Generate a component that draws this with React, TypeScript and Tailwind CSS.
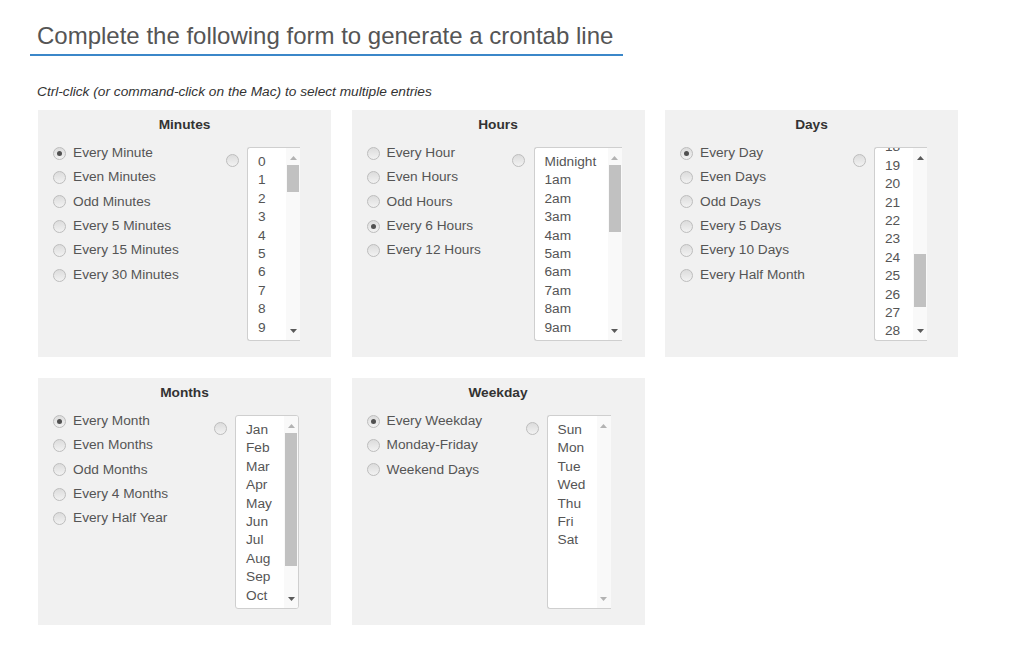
import React from "react";

type Opt = { label: string; checked?: boolean };

const Radio = ({ checked }: { checked?: boolean }) => (
  <span className="w-[13px] h-[13px] rounded-full border border-[#bdbdbd] bg-linear-to-b from-[#dcdcdc] to-[#f2f2f2] flex items-center justify-center shrink-0">
    {checked && <span className="w-[5px] h-[5px] rounded-full bg-[#505050]" />}
  </span>
);

const Arrow = ({ up, dark }: { up?: boolean; dark?: boolean }) => (
  <svg width="7" height="4" viewBox="0 0 7 4">
    <polygon
      points={up ? "0,4 7,4 3.5,0" : "0,0 7,0 3.5,4"}
      fill={dark ? "#5a5a5a" : "#b3b3b3"}
    />
  </svg>
);

type PanelProps = {
  title: string;
  options: Opt[];
  listW: string;
  gap: string;
  boxW: string;
  rightBorder?: boolean;
  items: string[];
  scrollClass?: string;
  thumb?: string;
  upDark?: boolean;
  downDark?: boolean;
};

const Panel = (p: PanelProps) => (
  <div className="h-[247px] bg-[#f1f1f1] pt-[7px]">
    <div className="text-center font-bold leading-[16px] text-[13.7px] text-[#333]">{p.title}</div>
    <div className="flex mt-[8px]">
      <div className={`${p.listW} pl-[15px] shrink-0`}>
        {p.options.map((o) => (
          <div key={o.label} className="h-[24.4px] flex items-center gap-[7px] text-[13.7px] text-[#555]">
            <Radio checked={o.checked} />
            <span className="whitespace-nowrap">{o.label}</span>
          </div>
        ))}
      </div>
      <div className="mt-[13px]">
        <Radio />
      </div>
      <div
        className={
          p.rightBorder
            ? `${p.gap} ${p.boxW} mt-[6px] h-[194px] flex bg-white border border-[#cfcfcf] rounded-[3px] overflow-hidden`
            : `${p.gap} ${p.boxW} mt-[6px] h-[194px] flex bg-white border-y border-l border-[#cfcfcf] rounded-l-[3px] overflow-hidden`
        }
      >
        <div className="flex-1 overflow-hidden pl-[10px] pt-[5px]">
          <div className={p.scrollClass ?? ""}>
            {p.items.map((it) => (
              <div key={it} className="leading-[18.4px] h-[18.4px] text-[13.7px] text-[#555] whitespace-nowrap">
                {it}
              </div>
            ))}
          </div>
        </div>
        <div className="w-[14px] shrink-0 bg-[#f9f9f9] flex flex-col">
          <div className="h-[17px] flex items-center justify-center pt-[2px]">
            <Arrow up dark={p.upDark} />
          </div>
          <div className="flex-1 px-[1px]">
            {p.thumb && <div className={`${p.thumb} bg-[#c1c1c1]`} />}
          </div>
          <div className="h-[17px] flex items-center justify-center pb-[1px]">
            <Arrow dark={p.downDark} />
          </div>
        </div>
      </div>
    </div>
  </div>
);

const minutes = Array.from({ length: 10 }, (_, i) => String(i));
const hours = ["Midnight", ...Array.from({ length: 9 }, (_, i) => `${i + 1}am`)];
const days = Array.from({ length: 11 }, (_, i) => String(i + 18));
const months = ["Jan", "Feb", "Mar", "Apr", "May", "Jun", "Jul", "Aug", "Sep", "Oct"];
const weekdays = ["Sun", "Mon", "Tue", "Wed", "Thu", "Fri", "Sat"];

export default function App() {
  return (
    <div className="w-[1024px] h-[645px] bg-white overflow-hidden font-['Liberation_Sans',Arial,sans-serif]">
      <div className="pl-[30px] pt-[22px]">
        <h2 className="inline-block pl-[7px] pr-[10px] pb-[4px] border-b-2 border-[#3b87c9] text-[24px] leading-[28px] text-[#555] font-normal">
          Complete the following form to generate a crontab line
        </h2>
      </div>
      <p className="pl-[37px] mt-[28px] italic text-[13.7px] leading-[16px] text-[#333]">
        Ctrl-click (or command-click on the Mac) to select multiple entries
      </p>
      <div className="pl-[38px] mt-[10px] grid grid-cols-[293px_293px_293px] gap-x-[20.5px] gap-y-[21px]">
        <Panel
          title="Minutes"
          options={[
            { label: "Every Minute", checked: true },
            { label: "Even Minutes" },
            { label: "Odd Minutes" },
            { label: "Every 5 Minutes" },
            { label: "Every 15 Minutes" },
            { label: "Every 30 Minutes" },
          ]}
          listW="w-[188px]"
          gap="ml-[8px]"
          boxW="w-[53px]"
          items={minutes}
          thumb="mt-[0px] h-[27px]"
          downDark
        />
        <Panel
          title="Hours"
          options={[
            { label: "Every Hour" },
            { label: "Even Hours" },
            { label: "Odd Hours" },
            { label: "Every 6 Hours", checked: true },
            { label: "Every 12 Hours" },
          ]}
          listW="w-[160px]"
          gap="ml-[9px]"
          boxW="w-[88px]"
          items={hours}
          thumb="mt-[0px] h-[67px]"
          downDark
        />
        <Panel
          title="Days"
          options={[
            { label: "Every Day", checked: true },
            { label: "Even Days" },
            { label: "Odd Days" },
            { label: "Every 5 Days" },
            { label: "Every 10 Days" },
            { label: "Every Half Month" },
          ]}
          listW="w-[188px]"
          gap="ml-[8px]"
          boxW="w-[53px]"
          items={days}
          scrollClass="-mt-[14.6px]"
          thumb="mt-[89px] h-[53px]"
          upDark
          downDark
        />
        <Panel
          title="Months"
          options={[
            { label: "Every Month", checked: true },
            { label: "Even Months" },
            { label: "Odd Months" },
            { label: "Every 4 Months" },
            { label: "Every Half Year" },
          ]}
          listW="w-[176px]"
          gap="ml-[8px]"
          boxW="w-[64px]"
          rightBorder
          items={months}
          thumb="mt-[0px] h-[133px]"
          downDark
        />
        <Panel
          title="Weekday"
          options={[
            { label: "Every Weekday", checked: true },
            { label: "Monday-Friday" },
            { label: "Weekend Days" },
          ]}
          listW="w-[174px]"
          gap="ml-[8px]"
          boxW="w-[64px]"
          items={weekdays}
        />
      </div>
    </div>
  );
}
